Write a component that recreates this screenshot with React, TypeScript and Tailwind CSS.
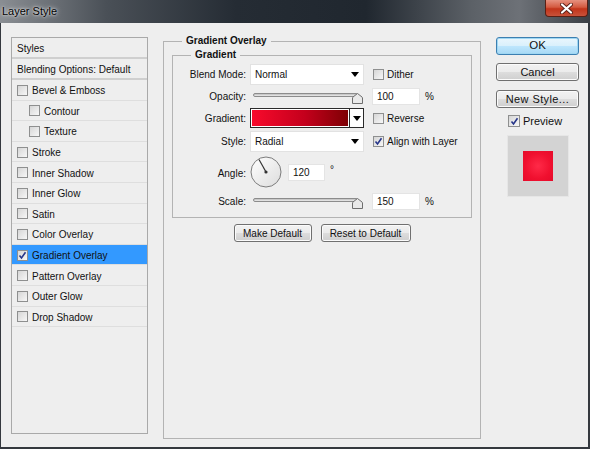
import React from 'react';

const STYLES: { label: string; indent?: boolean; active?: boolean; checked?: boolean }[] = [
  { label: 'Bevel & Emboss' },
  { label: 'Contour', indent: true },
  { label: 'Texture', indent: true },
  { label: 'Stroke' },
  { label: 'Inner Shadow' },
  { label: 'Inner Glow' },
  { label: 'Satin' },
  { label: 'Color Overlay' },
  { label: 'Gradient Overlay', active: true, checked: true },
  { label: 'Pattern Overlay' },
  { label: 'Outer Glow' },
  { label: 'Drop Shadow' },
];

function CheckBox({ checked = false, size = 'small' }: { checked?: boolean; size?: 'small' | 'large' }) {
  return (
    <span
      className={`${size === 'large' ? 'w-[12px] h-[12px]' : 'w-[11px] h-[11px]'} shrink-0 border border-[#8e8f8f] bg-[linear-gradient(135deg,#d6d6d6,#f7f7f7)] flex items-center justify-center`}
    >
      {checked && (
        <svg width="9" height="9" viewBox="0 0 9 9">
          <path d="M1.5 4.5 L3.5 7 L7.5 1.2" fill="none" stroke="#27368a" strokeWidth="1.6" />
        </svg>
      )}
    </span>
  );
}

function Caret() {
  return (
    <svg width="8" height="5" viewBox="0 0 8 5">
      <polygon points="0,0 8,0 4,5" fill="#000" />
    </svg>
  );
}

function Select({ value }: { value: string }) {
  return (
    <div className="w-[114px] h-[21px] bg-white border border-[#e2e2e2] flex items-center justify-between pl-[4px] pr-[4px]">
      <span>{value}</span>
      <Caret />
    </div>
  );
}

function Slider() {
  return (
    <div className="relative w-[114px] h-[17px]">
      <div className="absolute left-[3px] top-[5px] w-[105px] h-[4px] rounded-full border border-[#8c8c8c] bg-[linear-gradient(#bdbdbd,#ededed)]" />
      <svg className="absolute left-[102px] top-[5px]" width="11" height="11" viewBox="0 0 11 11">
        <path d="M0.5 5 Q0.5 4.5 1 4 L5.5 0.5 L10 4 Q10.5 4.5 10.5 5 L10.5 10.5 L0.5 10.5 Z" fill="#e9e9e9" stroke="#6e6e6e" />
      </svg>
    </div>
  );
}

function Field({ value, w }: { value: string; w: string }) {
  return <div className={`${w} h-[17px] bg-white border border-[#e4e4e4] pl-[4px] flex items-center`}>{value}</div>;
}

function Btn({ children, w, primary = false }: { children: React.ReactNode; w: string; primary?: boolean }) {
  return (
    <div
      className={`${w} h-[18px] rounded-[3px] border flex items-center justify-center ${
        primary
          ? 'border-[#3c7fb1] shadow-[inset_0_0_0_1px_#9fd7f3] bg-[linear-gradient(#eaf6fd_0%,#d9f0fc_50%,#bee6fd_51%,#a7d9f5_100%)]'
          : 'border-[#707070] shadow-[inset_0_0_0_1px_#fbfbfb] bg-[linear-gradient(#f2f2f2_0%,#ebebeb_50%,#dddddd_51%,#cfcfcf_100%)]'
      }`}
    >
      {children}
    </div>
  );
}

export default function App() {
  return (
    <div className="w-[590px] h-[449px] bg-[#34383e] flex flex-col overflow-hidden font-['Liberation_Sans',Arial,sans-serif] text-[#111]">
      {/* title bar */}
      <div className="h-[23px] shrink-0 flex items-start justify-between bg-[linear-gradient(90deg,#8a8e93_0%,#4a5057_18%,#252c34_40%,#20272f_62%,#5c6167_80%,#6d7177_88%,#3a3f45_100%)]">
        <span className="pl-[2px] pt-[4px] text-[11px] leading-[14px] text-black [text-shadow:0_0_5px_rgba(255,255,255,0.9),0_0_2px_rgba(255,255,255,0.8)]">
          Layer Style
        </span>
        <div className="mr-[2px] w-[43px] h-[17px] rounded-b-[4px] border border-t-0 border-[#5a1f14] bg-[linear-gradient(#e6917f,#d45a40_45%,#c2341a_55%,#c8523a)] flex items-center justify-center">
          <svg width="13" height="11" viewBox="0 0 13 11">
            <path d="M2 1.5 L11 9.5 M11 1.5 L2 9.5" stroke="#5b2018" strokeWidth="4" strokeLinecap="round" />
            <path d="M2 1.5 L11 9.5 M11 1.5 L2 9.5" stroke="#fff" strokeWidth="2.2" strokeLinecap="round" />
          </svg>
        </div>
      </div>

      {/* body */}
      <div className="flex-1 ml-[1px] mr-[2px] mb-[2px] bg-[#eeeeee] flex items-start pl-[10px] text-[10px]">
        {/* styles list */}
        <div className="mt-[14px] w-[137px] h-[397px] border border-[#a9a9a9] bg-[#eeeeee] flex flex-col">
          <div className="h-[21px] shrink-0 border-b-2 border-[#cfcfcf] pl-[5px] pt-[1px] flex items-center">Styles</div>
          <div className="h-[21px] shrink-0 border-b-2 border-[#cfcfcf] pl-[5px] pt-[1px] flex items-center">
            Blending Options: Default
          </div>
          {STYLES.map((s) => (
            <div
              key={s.label}
              className={`h-[20.6px] shrink-0 border-b border-[#dedede] pt-[1px] flex items-center gap-[4px] ${
                s.indent ? 'pl-[17px]' : 'pl-[5px]'
              } ${s.active ? 'bg-[#3399ff]' : ''}`}
            >
              <CheckBox checked={s.checked} />
              <span className="mt-[1px]">{s.label}</span>
            </div>
          ))}
        </div>

        {/* gradient overlay group */}
        <fieldset className="ml-[15px] mt-[11px] w-[318px] h-[405px] border border-[#b3b3b3]">
          <legend className="ml-[18px] px-[4px] font-bold leading-[14px]">Gradient Overlay</legend>
          <fieldset className="mx-[8px] border border-[#b3b3b3] pb-[7px]">
            <legend className="ml-[18px] px-[4px] font-bold leading-[14px]">Gradient</legend>

            <div className="flex items-center mt-[2px] h-[21px]">
              <span className="w-[73px] text-right">Blend Mode:</span>
              <div className="ml-[4px]">
                <Select value="Normal" />
              </div>
              <div className="ml-[9px]">
                <CheckBox />
              </div>
              <span className="ml-[3px]">Dither</span>
            </div>

            <div className="flex items-center mt-[3px] h-[17px]">
              <span className="w-[73px] text-right">Opacity:</span>
              <div className="ml-[4px]">
                <Slider />
              </div>
              <div className="ml-[8px]">
                <Field value="100" w="w-[48px]" />
              </div>
              <span className="ml-[5px]">%</span>
            </div>

            <div className="flex items-center mt-[3px] h-[20px]">
              <span className="w-[73px] text-right">Gradient:</span>
              <div className="ml-[4px] w-[114px] h-[20px] border border-[#2a2a2a] flex">
                <div className="flex-1 border border-white bg-[linear-gradient(90deg,#f80a2c,#c4001c_55%,#7e0004)]" />
                <div className="w-[14px] bg-white border-l border-[#2a2a2a] flex items-center justify-center">
                  <Caret />
                </div>
              </div>
              <div className="ml-[9px]">
                <CheckBox />
              </div>
              <span className="ml-[3px]">Reverse</span>
            </div>

            <div className="flex items-center mt-[3px] h-[21px]">
              <span className="w-[73px] text-right">Style:</span>
              <div className="ml-[4px]">
                <Select value="Radial" />
              </div>
              <div className="ml-[9px]">
                <CheckBox checked />
              </div>
              <span className="ml-[3px]">Align with Layer</span>
            </div>

            <div className="flex items-center mt-[4px] h-[32px]">
              <span className="w-[73px] text-right mt-[2px]">Angle:</span>
              <svg className="ml-[4px]" width="32" height="32" viewBox="0 0 32 32">
                <defs>
                  <linearGradient id="dial" x1="0" y1="0" x2="1" y2="1">
                    <stop offset="0" stopColor="#ffffff" />
                    <stop offset="1" stopColor="#dcdcdc" />
                  </linearGradient>
                </defs>
                <circle cx="16" cy="16" r="15" fill="url(#dial)" stroke="#7c7c7c" />
                <line x1="16" y1="16" x2="9" y2="3.5" stroke="#333" strokeWidth="1.2" />
                <circle cx="16" cy="16" r="1.6" fill="#333" />
              </svg>
              <div className="ml-[6px]">
                <Field value="120" w="w-[37px]" />
              </div>
              <span className="ml-[5px] self-start mt-[6px]">°</span>
            </div>

            <div className="flex items-center mt-[5px] h-[17px]">
              <span className="w-[73px] text-right">Scale:</span>
              <div className="ml-[4px]">
                <Slider />
              </div>
              <div className="ml-[8px]">
                <Field value="150" w="w-[48px]" />
              </div>
              <span className="ml-[5px]">%</span>
            </div>
          </fieldset>

          <div className="mt-[6px] flex justify-center gap-[9px]">
            <Btn w="w-[78px]">Make Default</Btn>
            <Btn w="w-[90px]">Reset to Default</Btn>
          </div>
        </fieldset>

        {/* right column */}
        <div className="ml-[15px] mt-[14px] w-[83px] flex flex-col text-[11px]">
          <Btn w="w-[83px]" primary>
            <span className="text-[11.5px]">OK</span>
          </Btn>
          <div className="mt-[8px]">
            <Btn w="w-[83px]">Cancel</Btn>
          </div>
          <div className="mt-[9px]">
            <Btn w="w-[83px]">
              <span className="tracking-[0.4px]">New Style...</span>
            </Btn>
          </div>
          <div className="mt-[6px] ml-[12px] h-[14px] flex items-center gap-[3px]">
            <CheckBox checked size="large" />
            <span>Preview</span>
          </div>
          <div className="mt-[7px] ml-[11px] w-[62px] h-[62px] border border-[#e6e6e6] bg-[#d3d3d3] flex items-center justify-center">
            <div className="w-[30px] h-[30px] bg-[radial-gradient(circle,#ff2a48_0%,#f0102f_60%,#e60a2a_100%)]" />
          </div>
        </div>
      </div>
    </div>
  );
}
